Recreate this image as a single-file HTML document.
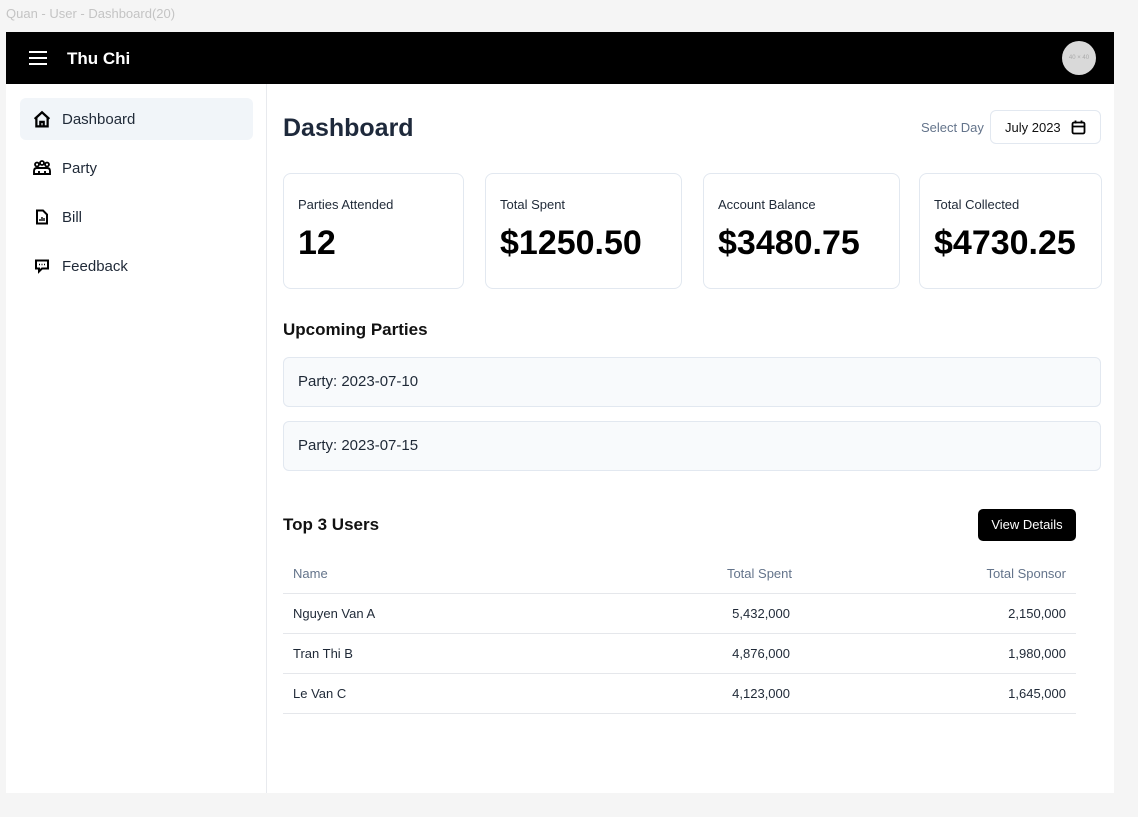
<!DOCTYPE html>
<html><head><meta charset="utf-8"><style>
*{box-sizing:border-box;margin:0;padding:0}
body{width:1138px;height:817px;background:#f5f5f5;font-family:"Liberation Sans",sans-serif;position:relative;overflow:hidden;color:#111}
.abs{position:absolute}
.title{left:6px;top:6px;font-size:13px;color:#c4c4c4}
.frame{left:6px;top:32px;width:1108px;height:761px;background:#fff}
.hdr{left:0;top:0;width:1108px;height:52px;background:#000}
.side{left:0;top:52px;width:261px;height:709px;border-right:1px solid #e8eaee}
.nav{position:absolute;left:14px;width:233px;height:42px;border-radius:6px;display:flex;align-items:center;padding-left:13px;font-size:15px;color:#1f2937}
.nav svg{margin-right:11px;flex:none}
.card{position:absolute;top:141px;height:116px;border:1px solid #e2e8f0;border-radius:8px;padding:0 14px}
.card .l{position:absolute;top:23px;font-size:13px;color:#1f2937}
.card .v{position:absolute;top:50px;font-size:34px;font-weight:bold;color:#000}
.party{position:absolute;left:277px;width:818px;height:50px;background:#f8fafc;border:1px solid #e2e8f0;border-radius:6px;padding-left:14px;line-height:48px;font-size:15px;color:#1f2937}
.row{position:absolute;left:277px;width:793px;height:40px;border-bottom:1px solid #e5e7eb;font-size:13px;color:#1f2937}
.row span{position:absolute;top:12px}
</style></head><body>
<div class="abs title">Quan - User - Dashboard(20)</div>
<div class="abs frame">
 <div class="abs hdr">
  <svg class="abs" style="left:23px;top:19px" width="18" height="14"><path d="M0 1H18M0 7H18M0 13H18" stroke="#fff" stroke-width="2"/></svg>
  <div class="abs" style="left:61px;top:17px;color:#fff;font-weight:bold;font-size:17px">Thu Chi</div>
  <div class="abs" style="left:1056px;top:9px;width:34px;height:34px;border-radius:50%;background:#d9d9d9;font-size:6px;color:#aaa;text-align:center;line-height:34px">40 × 40</div>
 </div>
 <div class="abs side">
  <div class="nav" style="top:14px;background:#f1f5f9"><svg width="18" height="18" viewBox="0 0 16 16"><path d="M1.5 8L8 2l6.5 6M3 7v7.5h10V7M6.5 14.5v-4h3v4" fill="none" stroke="#000" stroke-width="2"/></svg>Dashboard</div>
  <div class="nav" style="top:63px"><svg width="18" height="16" viewBox="0 0 18 16"><circle cx="4" cy="4.5" r="2" fill="none" stroke="#000" stroke-width="1.8"/><circle cx="9" cy="3" r="2" fill="none" stroke="#000" stroke-width="1.8"/><circle cx="14" cy="4.5" r="2" fill="none" stroke="#000" stroke-width="1.8"/><path d="M1 14v-3q0-3 3-3h10q3 0 3 3v3zM6 14v-3M12 14v-3" fill="none" stroke="#000" stroke-width="1.9"/></svg>Party</div>
  <div class="nav" style="top:112px"><svg width="18" height="16" viewBox="0 0 16 16"><path d="M3 1.5h6l4 4v9H3z" fill="none" stroke="#000" stroke-width="2"/><path d="M6 12v-2M8 12V8M10 12V9" stroke="#000" stroke-width="1.4"/></svg>Bill</div>
  <div class="nav" style="top:161px"><svg width="18" height="16" viewBox="0 0 16 16"><path d="M2 2.5h12v8H8l-3 3v-3H2z" fill="none" stroke="#000" stroke-width="2"/><path d="M5 6.5h1M7.5 6.5h1M10 6.5h1" stroke="#000" stroke-width="1.6"/></svg>Feedback</div>
 </div>
 <div class="abs" style="left:277px;top:82px;font-size:25px;font-weight:bold;color:#1e293b">Dashboard</div>
 <div class="abs" style="left:915px;top:88px;font-size:13px;color:#64748b">Select Day</div>
 <div class="abs" style="left:984px;top:78px;width:111px;height:34px;border:1px solid #e2e8f0;border-radius:6px;font-size:13px;color:#111;padding:9px 0 0 14px">July 2023
  <svg class="abs" style="left:80px;top:9px" width="15" height="15" viewBox="0 0 15 15"><rect x="1.5" y="2.5" width="12" height="11" rx="1.5" fill="none" stroke="#000" stroke-width="1.8"/><path d="M1.5 6.5h12M4.5 0.5v3M10.5 0.5v3" stroke="#000" stroke-width="1.8"/></svg></div>
 <div class="card" style="left:277px;width:181px"><div class="l">Parties Attended</div><div class="v">12</div></div>
 <div class="card" style="left:479px;width:197px"><div class="l">Total Spent</div><div class="v">$1250.50</div></div>
 <div class="card" style="left:697px;width:197px"><div class="l">Account Balance</div><div class="v">$3480.75</div></div>
 <div class="card" style="left:913px;width:183px"><div class="l">Total Collected</div><div class="v">$4730.25</div></div>
 <div class="abs" style="left:277px;top:288px;font-size:17px;font-weight:bold;color:#111">Upcoming Parties</div>
 <div class="party" style="top:325px">Party: 2023-07-10</div>
 <div class="party" style="top:389px">Party: 2023-07-15</div>
 <div class="abs" style="left:277px;top:483px;font-size:17px;font-weight:bold;color:#111">Top 3 Users</div>
 <div class="abs" style="left:972px;top:477px;width:98px;height:32px;background:#000;border-radius:5px;color:#fff;font-size:13px;text-align:center;line-height:32px">View Details</div>
 <div class="row" style="top:522px;color:#64748b"><span style="left:10px">Name</span><span style="right:284px">Total Spent</span><span style="right:10px">Total Sponsor</span></div>
 <div class="row" style="top:562px"><span style="left:10px">Nguyen Van A</span><span style="right:286px">5,432,000</span><span style="right:10px">2,150,000</span></div>
 <div class="row" style="top:602px"><span style="left:10px">Tran Thi B</span><span style="right:286px">4,876,000</span><span style="right:10px">1,980,000</span></div>
 <div class="row" style="top:642px"><span style="left:10px">Le Van C</span><span style="right:286px">4,123,000</span><span style="right:10px">1,645,000</span></div>
</div>
</body></html>
